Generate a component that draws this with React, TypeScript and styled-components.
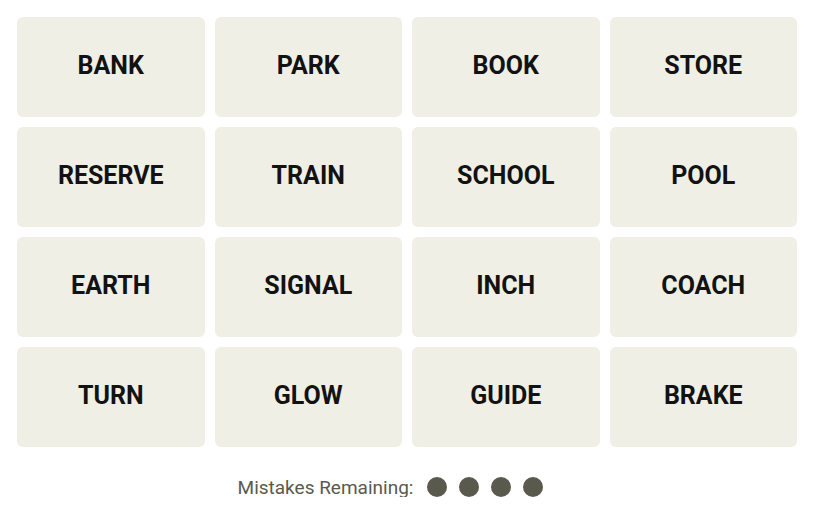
import React from "react";
import styled, { createGlobalStyle } from "styled-components";

const GlobalStyle = createGlobalStyle`
  html, body {
    margin: 0;
    background: #ffffff;
  }
`;

const Page = styled.div`
  width: 780px;
  padding: 17px 0 0 17px;
  font-family: Roboto, "Liberation Sans", sans-serif;
`;

const Board = styled.div`
  display: grid;
  grid-template-columns: repeat(4, 1fr);
  grid-auto-rows: 100px;
  gap: 10px;
`;

const Tile = styled.button`
  display: flex;
  align-items: center;
  justify-content: center;
  border: none;
  border-radius: 6px;
  background: #efefe6;
  color: #121212;
  font-family: Roboto, "Liberation Sans", sans-serif;
  font-weight: 700;
  font-size: 25px;
  text-transform: uppercase;
  padding: 0 0 4px;
  cursor: pointer;
`;

const Footer = styled.div`
  display: flex;
  align-items: center;
  justify-content: center;
  height: 20px;
  margin-top: 30px;
  padding-right: 33px;
`;

const Label = styled.span`
  color: #5a594e;
  font-size: 19px;
  margin-right: 14px;
`;

const Dots = styled.div`
  display: flex;
  gap: 12px;
`;

const Dot = styled.span`
  width: 20px;
  height: 20px;
  border-radius: 50%;
  background: #5a594e;
`;

const words = [
  "BANK", "PARK", "BOOK", "STORE",
  "RESERVE", "TRAIN", "SCHOOL", "POOL",
  "EARTH", "SIGNAL", "INCH", "COACH",
  "TURN", "GLOW", "GUIDE", "BRAKE",
];

const App: React.FC = () => {
  const mistakes = 4;
  return (
    <>
      <GlobalStyle />
      <Page>
        <Board>
          {words.map((w) => (
            <Tile key={w}>{w}</Tile>
          ))}
        </Board>
        <Footer>
          <Label>Mistakes Remaining:</Label>
          <Dots>
            {Array.from({ length: mistakes }).map((_, i) => (
              <Dot key={i} />
            ))}
          </Dots>
        </Footer>
      </Page>
    </>
  );
};

export default App;
